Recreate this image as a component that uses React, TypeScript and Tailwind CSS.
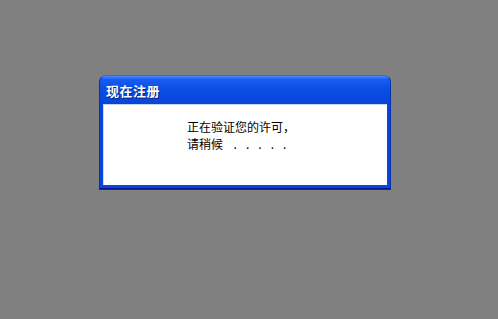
import React from 'react'

const dots = [0, 1, 2, 3, 4]

const RegisterDialog: React.FC = () => {
    return (
        <div className="w-[292px] h-[115px] flex flex-col rounded-t-[7px] bg-[#0a45dc] border border-[#0831a8] border-t-[#2f6df0] shadow-[inset_0_-1px_0_#00138c]">
            <div className="h-[28px] shrink-0 flex items-center px-[6px] rounded-t-[6px] bg-[linear-gradient(to_bottom,#4b8cff_0%,#1a5cf0_12%,#0a4fe4_45%,#0848de_80%,#0a44d6_100%)]">
                <span className="text-[13px] font-bold text-white leading-none tracking-[0.5px] [text-shadow:1px_1px_0_#0a1f7a]">现在注册</span>
            </div>
            <div className="flex-1 mx-[3px] mb-[4px] bg-white border-l border-t border-[#c8d8ff] pl-[83px] pt-[13px]">
                <p className="text-[12px] leading-[17px] text-black">正在验证您的许可，</p>
                <p className="flex text-[12px] leading-[17px] text-black">
                    <span>请稍候</span>
                    <span className="ml-[6px] flex">
                        {dots.map((d) => (
                            <span key={d} className="w-[12.4px] text-center">.</span>
                        ))}
                    </span>
                </p>
            </div>
        </div>
    )
}

export default function App() {
    return (
        <div
            className="w-[498px] h-[319px] bg-[#808080] pl-[99px] pt-[75px]"
            style={{ fontFamily: '"Noto Sans CJK SC", "Liberation Sans", sans-serif' }}
        >
            <RegisterDialog />
        </div>
    )
}
